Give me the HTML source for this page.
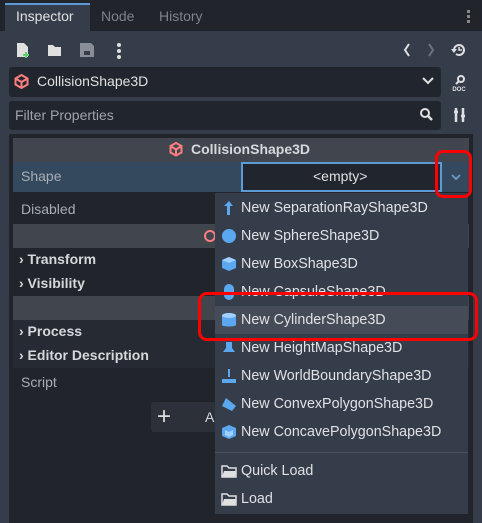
<!DOCTYPE html>
<html><head><meta charset="utf-8"><style>
*{box-sizing:border-box;margin:0;padding:0}
body{width:482px;height:523px;background:#363d4a;font-family:"Liberation Sans","DejaVu Sans",sans-serif;font-size:14px;color:#cdcfd2;position:relative;overflow:hidden}
.a{position:absolute}
.t{position:absolute;white-space:nowrap}
</style></head><body>
<div class="a" style="left:0;top:0;width:482px;height:31px;background:#21252b"></div>
<div class="a" style="left:5px;top:3px;width:85px;height:28px;background:#363d4a;border-top:2px solid #5c9bd6"></div>
<div class="t" style="left:16px;top:8px;color:#e0e0e0">Inspector</div>
<div class="t" style="left:101px;top:8px;color:#7e838b">Node</div>
<div class="t" style="left:159px;top:8px;color:#7e838b">History</div>
<div class="a" style="left:467px;top:10px;width:3px;height:3px;background:#888;box-shadow:0 5px #888,0 10px #888"></div>
<!-- toolbar -->
<svg class="a" style="left:15px;top:41px" width="16" height="18"><path d="M2 2h7l4 4v10H2z" fill="#e0e0e0"/><path d="M11 11v6M8 14h6" stroke="#5fd36b" stroke-width="2"/></svg>
<svg class="a" style="left:47px;top:42px" width="16" height="16"><path d="M1 3h5l2 2h6v9H1z" fill="#e0e0e0"/></svg>
<svg class="a" style="left:79px;top:42px" width="16" height="16"><path d="M1 1h11l3 3v11H1z" fill="#8a8f97"/><rect x="5" y="9" width="6" height="4" fill="#363d4a"/></svg>
<div class="a" style="left:117px;top:43px;width:4px;height:4px;border-radius:2px;background:#e0e0e0;box-shadow:0 6px #e0e0e0,0 12px #e0e0e0"></div>
<svg class="a" style="left:403px;top:43px" width="8" height="14"><path d="M6 1L2 7l4 6" stroke="#e0e0e0" stroke-width="2" fill="none"/></svg>
<svg class="a" style="left:427px;top:43px" width="8" height="14"><path d="M2 1l4 6-4 6" stroke="#6e737b" stroke-width="2" fill="none"/></svg>
<svg class="a" style="left:451px;top:42px" width="16" height="16"><path d="M3 8a5 5 0 1 1 2 4" stroke="#e0e0e0" stroke-width="2" fill="none"/><path d="M0 7h6L3 11z" fill="#e0e0e0"/><path d="M8 5v3h3" stroke="#e0e0e0" stroke-width="1.5" fill="none"/></svg>
<!-- node selector -->
<div class="a" style="left:9px;top:67px;width:432px;height:30px;background:#21252e;border-radius:3px"></div>
<svg class="a" style="left:14px;top:74px" width="15" height="15"><path d="M7.5 1l6 3.5v6L7.5 14l-6-3.5v-6z M7.5 8l6-3.5M7.5 8L1.5 4.5M7.5 8v6" stroke="#fc7f7f" stroke-width="2" fill="none"/></svg>
<div class="t" style="left:37px;top:73px;color:#e0e0e0">CollisionShape3D</div>
<svg class="a" style="left:422px;top:77px" width="12" height="8"><path d="M1 1l5 5 5-5" stroke="#e0e0e0" stroke-width="2" fill="none"/></svg>
<svg class="a" style="left:451px;top:74px" width="16" height="18"><circle cx="10" cy="5" r="3" stroke="#e0e0e0" stroke-width="2" fill="none"/><path d="M8 7l-3 3" stroke="#e0e0e0" stroke-width="2"/><text x="8" y="17" font-size="6" font-weight="bold" fill="#e0e0e0" text-anchor="middle" font-family="Liberation Sans">DOC</text></svg>
<!-- filter -->
<div class="a" style="left:9px;top:101px;width:432px;height:29px;background:#21252e;border-radius:3px"></div>
<div class="t" style="left:15px;top:107px;color:#a0a4aa">Filter Properties</div>
<svg class="a" style="left:419px;top:107px" width="14" height="14"><circle cx="6" cy="6" r="4" stroke="#e0e0e0" stroke-width="2" fill="none"/><path d="M9 9l4 4" stroke="#e0e0e0" stroke-width="2.5"/></svg>
<svg class="a" style="left:453px;top:107px" width="14" height="16"><path d="M3 1v14M10 1v14M1 5h4M8 9h4" stroke="#e0e0e0" stroke-width="2.5"/></svg>
<!-- inspector area -->
<div class="a" style="left:9px;top:134px;width:464px;height:389px;background:#21252b"></div>
<div class="a" style="left:13px;top:138px;width:456px;height:24px;background:#41454e"></div>
<svg class="a" style="left:169px;top:142px" width="14" height="15"><path d="M7 1l5.5 3v6.5L7 13.5 1.5 10.5V4z M7 7.5l5.5-3.5M7 7.5L1.5 4M7 7.5v6" stroke="#fc7f7f" stroke-width="2" fill="none"/></svg>
<div class="t" style="left:191px;top:141px;color:#d6d8db;font-weight:bold">CollisionShape3D</div>
<div class="a" style="left:13px;top:162px;width:228px;height:30px;background:#35495e"></div>
<div class="t" style="left:21px;top:168px;color:#a6adb5">Shape</div>
<div class="a" style="left:241px;top:162px;width:201px;height:30px;background:#21252e;border:2px solid #5c9bd6"></div>
<div class="t" style="left:313px;top:168px;color:#e0e0e0">&lt;empty&gt;</div>
<div class="a" style="left:442px;top:162px;width:27px;height:30px;background:#35495e"></div>
<svg class="a" style="left:451px;top:174px" width="10" height="7"><path d="M1 1l4 4 4-4" stroke="#6a9bc7" stroke-width="1.8" fill="none"/></svg>
<div class="t" style="left:21px;top:201px;color:#a6adb5">Disabled</div>
<div class="a" style="left:13px;top:224px;width:456px;height:24px;background:#41454e"></div>
<div class="a" style="left:204px;top:230px;width:12px;height:12px;border:2px solid #fc7f7f;border-radius:50%"></div>
<div class="t" style="left:19px;top:251px;color:#d6d8db;font-weight:bold">› Transform</div>
<div class="t" style="left:19px;top:275px;color:#d6d8db;font-weight:bold">› Visibility</div>
<div class="a" style="left:13px;top:296px;width:456px;height:24px;background:#41454e"></div>
<div class="a" style="left:13px;top:320px;width:456px;height:48px;background:#262a32"></div>
<div class="t" style="left:19px;top:323px;color:#d6d8db;font-weight:bold">› Process</div>
<div class="t" style="left:19px;top:347px;color:#d6d8db;font-weight:bold">› Editor Description</div>
<div class="t" style="left:21px;top:374px;color:#a6adb5">Script</div>
<div class="a" style="left:151px;top:402px;width:70px;height:30px;background:#2c3038;border-radius:3px"></div>
<div class="t" style="left:157px;top:402px;color:#e0e0e0;font-size:24px;line-height:30px">+</div>
<div class="t" style="left:205px;top:409px;color:#d6d8db">A</div>
<!-- popup -->
<div class="a" style="left:215px;top:193px;width:253px;height:321px;background:#363d4a"></div>
<div class="a" style="left:215px;top:306px;width:253px;height:28px;background:#454b57"></div>
<div class="a" style="left:215px;top:452px;width:253px;height:1px;background:#4b5260"></div>
<svg class="a" style="left:221px;top:200px" width="16" height="16"><path d="M8 1l-5 5h3v9h3V6h3z" fill="#5ba8f0"/></svg>
<svg class="a" style="left:221px;top:228px" width="16" height="16"><circle cx="8" cy="8" r="7" fill="#5ba8f0"/></svg>
<svg class="a" style="left:221px;top:256px" width="16" height="16"><path d="M8 1l7 3v8l-7 3-7-3V4z" fill="#5ba8f0"/><path d="M1 4l7 3 7-3-7-3z" fill="#9fd0ff"/></svg>
<svg class="a" style="left:221px;top:284px" width="16" height="16"><rect x="3" y="0" width="10" height="16" rx="5" fill="#5ba8f0"/></svg>
<svg class="a" style="left:221px;top:312px" width="16" height="16"><path d="M1 3v10c0 2 14 2 14 0V3z" fill="#5ba8f0"/><ellipse cx="8" cy="3.5" rx="7" ry="2.5" fill="#9fd0ff"/></svg>
<svg class="a" style="left:221px;top:340px" width="16" height="16"><path d="M5 2h6v6l3 4H2l3-4z" fill="#5ba8f0"/></svg>
<svg class="a" style="left:221px;top:368px" width="16" height="16"><path d="M7 1h2v8H7zM1 11h14v4H1z" fill="#5ba8f0"/></svg>
<svg class="a" style="left:221px;top:396px" width="16" height="16"><path d="M5 2l10 8-4 5-10-5z" fill="#5ba8f0"/></svg>
<svg class="a" style="left:221px;top:424px" width="16" height="16"><path d="M8 1l7 3v8l-7 3-7-3V4z" fill="#5ba8f0"/><path d="M4 6l4 2 4-2v5l-4 2-4-2z" fill="#9fd0ff"/></svg>
<svg class="a" style="left:221px;top:463px" width="16" height="16"><path d="M1 3h5l2 2h7v9H1z" fill="none" stroke="#e0e0e0" stroke-width="1.5"/><path d="M3 8h12l-1 6H1z" fill="#e0e0e0"/></svg>
<svg class="a" style="left:221px;top:491px" width="16" height="16"><path d="M1 3h5l2 2h7v9H1z" fill="none" stroke="#e0e0e0" stroke-width="1.5"/><path d="M3 8h12l-1 6H1z" fill="#e0e0e0"/></svg>
<div class="a" style="left:241px;top:194px;color:#dfe1e4;line-height:28px;font-size:14.3px">
<div>New SeparationRayShape3D</div><div>New SphereShape3D</div><div>New BoxShape3D</div><div>New CapsuleShape3D</div><div>New CylinderShape3D</div><div>New HeightMapShape3D</div><div>New WorldBoundaryShape3D</div><div>New ConvexPolygonShape3D</div><div>New ConcavePolygonShape3D</div>
<div style="margin-top:11px">Quick Load</div><div>Load</div></div>
<!-- red highlights -->
<div class="a" style="left:435px;top:150px;width:37px;height:48px;border:3px solid #f00;border-radius:8px"></div>
<div class="a" style="left:198px;top:292px;width:280px;height:49px;border:3px solid #f00;border-radius:9px"></div>
</body></html>
